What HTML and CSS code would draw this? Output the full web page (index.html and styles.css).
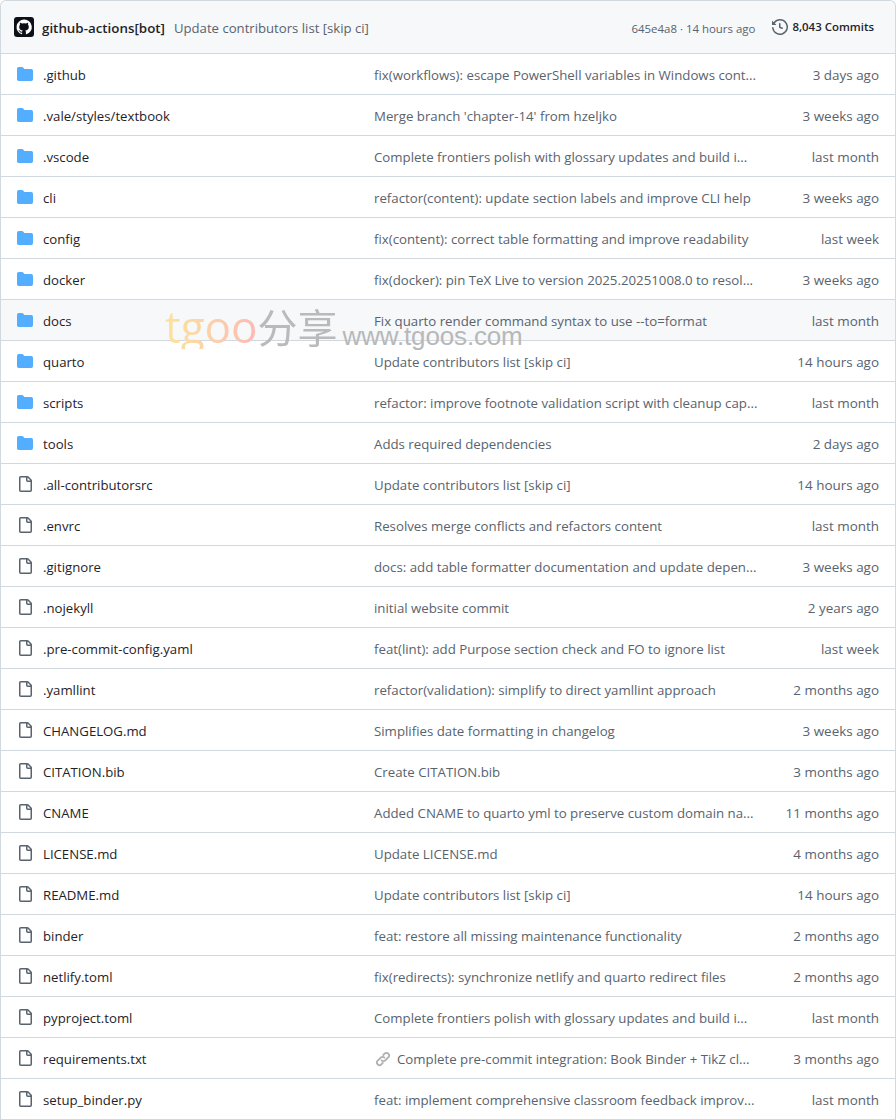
FILE: index.html
```html
<!DOCTYPE html>
<html lang="en">
<head>
<meta charset="utf-8">
<title>Repository files</title>
<link rel="stylesheet" href="styles.css">
</head>
<body>
<svg class="sprite" width="0" height="0" aria-hidden="true">
  <symbol id="folder" viewBox="0 0 16 16"><path d="M1.75 1A1.75 1.75 0 0 0 0 2.75v10.5C0 14.216.784 15 1.75 15h12.5A1.75 1.75 0 0 0 16 13.25v-8.5A1.75 1.75 0 0 0 14.25 3H7.5a.25.25 0 0 1-.2-.1l-.9-1.2C6.07 1.26 5.55 1 5 1H1.75Z"/></symbol>
  <symbol id="file" viewBox="0 0 16 16"><path d="M2 1.75C2 .784 2.784 0 3.75 0h6.586c.464 0 .909.184 1.237.513l2.914 2.914c.329.328.513.773.513 1.237v9.586A1.75 1.75 0 0 1 13.25 16h-9.5A1.75 1.75 0 0 1 2 14.25Zm1.75-.25a.25.25 0 0 0-.25.25v12.5c0 .138.112.25.25.25h9.5a.25.25 0 0 0 .25-.25V6h-2.75A1.75 1.75 0 0 1 9 4.25V1.5Zm6.75.062V4.25c0 .138.112.25.25.25h2.688l-.011-.013-2.914-2.914-.013-.011Z"/></symbol>
</svg>
<main class="files">
  <header class="head">
    <svg class="avatar" viewBox="0 0 20 20" aria-hidden="true"><rect width="20" height="20" rx="3" fill="#0d1117"/><path fill="#fff" d="M10 2.6a7.5 7.5 0 0 0-2.37 14.6c.37.07.5-.16.5-.36v-1.3c-2.08.45-2.52-.9-2.52-.9-.34-.86-.83-1.09-.83-1.09-.68-.46.05-.45.05-.45.75.05 1.15.77 1.15.77.67 1.14 1.75.81 2.18.62.07-.48.26-.81.48-1-1.66-.19-3.41-.83-3.41-3.7 0-.82.29-1.48.77-2-.08-.19-.33-.95.07-1.98 0 0 .63-.2 2.06.77a7.1 7.1 0 0 1 3.75 0c1.43-.97 2.06-.77 2.06-.77.41 1.03.15 1.79.08 1.98.48.52.77 1.18.77 2 0 2.88-1.75 3.51-3.42 3.7.27.23.51.69.51 1.39v2.06c0 .2.13.44.51.36A7.5 7.5 0 0 0 10 2.6Z"/></svg>
    <strong class="author">github-actions[bot]</strong>
    <span class="head-msg">Update contributors list [skip ci]</span>
    <span class="head-sha">645e4a8 · 14 hours ago</span>
    <svg class="history" viewBox="0 0 16 16" aria-hidden="true"><path d="m.427 1.927 1.215 1.215a8.002 8.002 0 1 1-1.6 5.685.75.75 0 1 1 1.493-.154 6.5 6.5 0 1 0 1.18-4.458l1.358 1.358A.25.25 0 0 1 3.896 6H.25A.25.25 0 0 1 0 5.75V2.104a.25.25 0 0 1 .427-.177ZM7.750 4a.75.75 0 0 1 .75.75v2.992l2.028.812a.75.75 0 0 1-.557 1.392l-2.500-1A.751.751 0 0 1 7 8.250v-3.500A.75.75 0 0 1 7.750 4Z"/></svg>
    <span class="commits">8,043 Commits</span>
  </header>
  <div class="row"><svg class="ic dir"><use href="#folder"/></svg><span class="name">.github</span><span class="msg">fix(workflows): escape PowerShell variables in Windows cont...</span><span class="age">3 days ago</span></div>
  <div class="row"><svg class="ic dir"><use href="#folder"/></svg><span class="name">.vale/styles/textbook</span><span class="msg">Merge branch 'chapter-14' from hzeljko</span><span class="age">3 weeks ago</span></div>
  <div class="row"><svg class="ic dir"><use href="#folder"/></svg><span class="name">.vscode</span><span class="msg">Complete frontiers polish with glossary updates and build i...</span><span class="age">last month</span></div>
  <div class="row"><svg class="ic dir"><use href="#folder"/></svg><span class="name">cli</span><span class="msg">refactor(content): update section labels and improve CLI help</span><span class="age">3 weeks ago</span></div>
  <div class="row"><svg class="ic dir"><use href="#folder"/></svg><span class="name">config</span><span class="msg">fix(content): correct table formatting and improve readability</span><span class="age">last week</span></div>
  <div class="row"><svg class="ic dir"><use href="#folder"/></svg><span class="name">docker</span><span class="msg">fix(docker): pin TeX Live to version 2025.20251008.0 to resol...</span><span class="age">3 weeks ago</span></div>
  <div class="row hover"><svg class="ic dir"><use href="#folder"/></svg><span class="name">docs</span><span class="msg">Fix quarto render command syntax to use --to=format</span><span class="age">last month</span></div>
  <div class="row"><svg class="ic dir"><use href="#folder"/></svg><span class="name">quarto</span><span class="msg">Update contributors list [skip ci]</span><span class="age">14 hours ago</span></div>
  <div class="row"><svg class="ic dir"><use href="#folder"/></svg><span class="name">scripts</span><span class="msg">refactor: improve footnote validation script with cleanup cap...</span><span class="age">last month</span></div>
  <div class="row"><svg class="ic dir"><use href="#folder"/></svg><span class="name">tools</span><span class="msg">Adds required dependencies</span><span class="age">2 days ago</span></div>
  <div class="row"><svg class="ic"><use href="#file"/></svg><span class="name">.all-contributorsrc</span><span class="msg">Update contributors list [skip ci]</span><span class="age">14 hours ago</span></div>
  <div class="row"><svg class="ic"><use href="#file"/></svg><span class="name">.envrc</span><span class="msg">Resolves merge conflicts and refactors content</span><span class="age">last month</span></div>
  <div class="row"><svg class="ic"><use href="#file"/></svg><span class="name">.gitignore</span><span class="msg">docs: add table formatter documentation and update depen...</span><span class="age">3 weeks ago</span></div>
  <div class="row"><svg class="ic"><use href="#file"/></svg><span class="name">.nojekyll</span><span class="msg">initial website commit</span><span class="age">2 years ago</span></div>
  <div class="row"><svg class="ic"><use href="#file"/></svg><span class="name">.pre-commit-config.yaml</span><span class="msg">feat(lint): add Purpose section check and FO to ignore list</span><span class="age">last week</span></div>
  <div class="row"><svg class="ic"><use href="#file"/></svg><span class="name">.yamllint</span><span class="msg">refactor(validation): simplify to direct yamllint approach</span><span class="age">2 months ago</span></div>
  <div class="row"><svg class="ic"><use href="#file"/></svg><span class="name">CHANGELOG.md</span><span class="msg">Simplifies date formatting in changelog</span><span class="age">3 weeks ago</span></div>
  <div class="row"><svg class="ic"><use href="#file"/></svg><span class="name">CITATION.bib</span><span class="msg">Create CITATION.bib</span><span class="age">3 months ago</span></div>
  <div class="row"><svg class="ic"><use href="#file"/></svg><span class="name">CNAME</span><span class="msg">Added CNAME to quarto yml to preserve custom domain na...</span><span class="age">11 months ago</span></div>
  <div class="row"><svg class="ic"><use href="#file"/></svg><span class="name">LICENSE.md</span><span class="msg">Update LICENSE.md</span><span class="age">4 months ago</span></div>
  <div class="row"><svg class="ic"><use href="#file"/></svg><span class="name">README.md</span><span class="msg">Update contributors list [skip ci]</span><span class="age">14 hours ago</span></div>
  <div class="row"><svg class="ic"><use href="#file"/></svg><span class="name">binder</span><span class="msg">feat: restore all missing maintenance functionality</span><span class="age">2 months ago</span></div>
  <div class="row"><svg class="ic"><use href="#file"/></svg><span class="name">netlify.toml</span><span class="msg">fix(redirects): synchronize netlify and quarto redirect files</span><span class="age">2 months ago</span></div>
  <div class="row"><svg class="ic"><use href="#file"/></svg><span class="name">pyproject.toml</span><span class="msg">Complete frontiers polish with glossary updates and build i...</span><span class="age">last month</span></div>
  <div class="row"><svg class="ic"><use href="#file"/></svg><span class="name">requirements.txt</span><span class="msg"><svg class="link" viewBox="0 0 16 16" aria-hidden="true"><path d="M6.6 9.4a2.6 2.6 0 0 0 3.7 0l3-3a2.6 2.6 0 0 0-3.7-3.7L8.3 4M9.4 6.600a2.600 2.600 0 0 0-3.700 0l-3 3a2.600 2.600 0 0 0 3.700 3.700L7.700 12"/></svg>Complete pre-commit integration: Book Binder + TikZ cl...</span><span class="age">3 months ago</span></div>
  <div class="row"><svg class="ic"><use href="#file"/></svg><span class="name">setup_binder.py</span><span class="msg">feat: implement comprehensive classroom feedback improv...</span><span class="age">last month</span></div>
  <div class="mark" aria-hidden="true"><span class="mark-brand">tgoo</span><span class="mark-cn">分享</span><span class="mark-url">www.tgoos.com</span></div>
</main>
</body>
</html>
```
FILE: styles.css
```css
* { box-sizing: border-box; }
html, body { margin: 0; padding: 0; }
body {
  background: #fff;
  color: #1f2328;
  font-family: "Open Sans", "Noto Sans", "Liberation Sans", sans-serif;
  font-size: 13.35px;
  overflow: hidden;
}
.sprite { position: absolute; }
.files {
  position: relative;
  width: 896px;
  border: 1px solid #d1d9e0;
  border-bottom: 0;
  border-radius: 6px 6px 0 0;
}
.head {
  display: flex;
  align-items: center;
  height: 53px;
  padding: 0 21px 0 13px;
  background: #f6f8fa;
  border-radius: 6px 6px 0 0;
  border-bottom: 1px solid #d1d9e0;
}
.avatar { width: 20px; height: 20px; margin-right: 8px; flex: none; }
.author { font-weight: 600; color: #1f2328; margin-right: 9px; white-space: nowrap; padding-top: 2px; }
.head-msg { color: #59636e; font-size: 13.15px; white-space: nowrap; flex: 1; padding-top: 2px; }
.head-sha { color: #59636e; font-size: 11.45px; white-space: nowrap; margin-right: 17px; padding-top: 2px; }
.history { width: 16px; height: 16px; fill: #59636e; margin-right: 4px; flex: none; }
.commits { font-size: 11.45px; font-weight: 600; white-space: nowrap; position: relative; top: -1px; }
.row {
  display: grid;
  grid-template-columns: 26px 331px 400px 1fr;
  align-items: center;
  height: 41px;
  padding: 0 16px;
  border-bottom: 1px solid #d1d9e0;
}
.hover { background: #f6f8fa; }
.ic { width: 16px; height: 16px; fill: #59636e; }
.dir { fill: #54aeff; }
.name { font-size: 13.2px; white-space: nowrap; padding-top: 2px; }
.msg { color: #59636e; font-size: 13.25px; white-space: nowrap; display: flex; align-items: center; padding-top: 2px; }
.age { color: #59636e; font-size: 13.45px; text-align: right; white-space: nowrap; padding-top: 2px; }
.link { width: 16px; height: 16px; margin-left: 1px; margin-right: 6px; fill: none; stroke: #b0b0b0; stroke-width: 1.8; stroke-linecap: round; flex: none; }
.mark {
  position: absolute;
  left: 164px;
  top: 302px;
  display: flex;
  align-items: baseline;
  pointer-events: none;
  white-space: nowrap;
  line-height: 46px;
}
.mark-brand {
  font-family: "Open Sans", sans-serif;
  font-size: 44px;
  background: linear-gradient(90deg, #fbe39c 0%, #fdd0a8 50%, #fdb9b5 100%);
  -webkit-background-clip: text;
  background-clip: text;
  color: transparent;
}
.mark-cn {
  font-family: "Noto Sans CJK SC", sans-serif;
  font-size: 40px;
  color: #b4b4b4;
  opacity: .9;
}
.mark-url {
  font-family: "Liberation Sans", sans-serif;
  font-size: 26px;
  color: #b8b8b8;
  margin-left: 5px;
  letter-spacing: -.15px;
  position: relative;
  top: 2px;
}
```
